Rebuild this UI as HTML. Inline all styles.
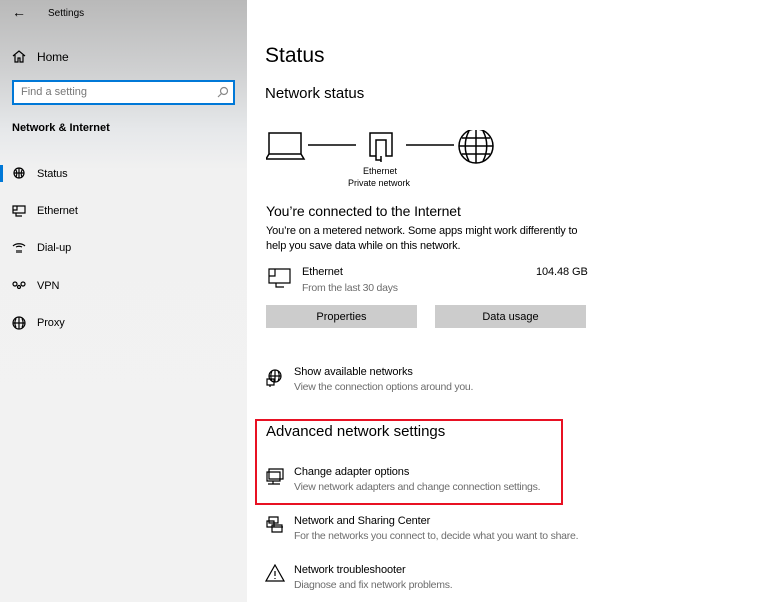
<!DOCTYPE html><html><head><style>
*{margin:0;padding:0;box-sizing:border-box}
body{width:768px;height:602px;position:relative;overflow:hidden;font-family:"Liberation Sans",sans-serif;color:#000;background:#fff}
.side{position:absolute;left:0;top:0;width:247px;height:602px;background:linear-gradient(180deg,#b9b9b9 0,#cfd0d1 70px,#e6e8ea 130px,#f1f1f1 170px,#f2f2f2 100%)}
.t{position:absolute;white-space:nowrap}
svg{position:absolute;fill:none;stroke:#000;stroke-width:1.2}
.s{font-size:11px;letter-spacing:-0.1px}
.g{color:#6d6d6d;font-size:10.5px;letter-spacing:-0.25px}
.btn{position:absolute;background:#ccc;height:23px;font-size:11px;text-align:center;line-height:24px;width:151px}
</style></head><body>
<div class="side">
<div class="t" style="left:12px;top:4px;font-size:14px">&#8592;</div>
<div class="t" style="left:48px;top:8px;font-size:10px">Settings</div>
<svg style="left:12px;top:50px" width="14" height="13" viewBox="0 0 14 13"><path d="M1 6L7 1L13 6M3 5V12H6V8H8V12H11V5"/></svg>
<div class="t s" style="left:37px;top:50px;font-size:12px">Home</div>
<div style="position:absolute;left:12px;top:80px;width:223px;height:25px;border:2px solid #0078d7;background:#fff"></div>
<div class="t" style="left:21px;top:86px;font-size:11px;color:#777">Find a setting</div>
<svg style="left:217px;top:86px;stroke:#888" width="12" height="12"><circle cx="7" cy="5" r="3.5"/><path d="M4.5 7.5L1 11"/></svg>
<div class="t" style="left:12px;top:122px;font-size:11px;font-weight:bold">Network &amp; Internet</div>
<div style="position:absolute;left:0;top:165px;width:3px;height:17px;background:#0078d7"></div>
<svg style="left:12px;top:167px" width="14" height="14"><circle cx="7" cy="6" r="5"/><path d="M2 6H12M7 1V11M4 3C5 5 5 8 4 10M10 3C9 5 9 8 10 10"/></svg>
<div class="t s" style="left:37px;top:168px">Status</div>
<svg style="left:12px;top:205px" width="14" height="12"><path d="M1 1H13V8H1ZM4 8V11H10M1 1V5H5V1"/></svg>
<div class="t s" style="left:37px;top:205px">Ethernet</div>
<svg style="left:12px;top:242px" width="14" height="12"><path d="M1 4C4 1 10 1 13 4M4 5C6 4 8 4 10 5M5 8V11M7 8V11M9 8V11"/></svg>
<div class="t s" style="left:37px;top:242px">Dial-up</div>
<svg style="left:12px;top:281px" width="14" height="8"><circle cx="3" cy="3" r="2"/><circle cx="11" cy="3" r="2"/><circle cx="7" cy="6" r="1.5"/></svg>
<div class="t s" style="left:37px;top:280px">VPN</div>
<svg style="left:12px;top:316px" width="14" height="14"><circle cx="7" cy="7" r="6"/><path d="M1 7H13M7 1V13M4 2.5C2.5 5.5 2.5 8.5 4 11.5M10 2.5C11.5 5.5 11.5 8.5 10 11.5"/></svg>
<div class="t s" style="left:37px;top:317px">Proxy</div>
</div>

<div class="t" style="left:265px;top:44px;font-size:21px">Status</div>
<div class="t" style="left:265px;top:85px;font-size:15px">Network status</div>
<svg style="left:266px;top:130px;stroke-width:1.5" width="235" height="35"><path d="M3 3H35V24H3ZM0 29H38L35 24M3 24L0 29"/><path d="M42 15H90M140 15H188"/><path d="M104 3H126V26H120V10H110V26H104ZM110 26V30H115"/><path d="M115 26V32"/><circle cx="210" cy="16" r="17"/><path d="M193 16H227M210 -1V33M203 1C198 10 198 22 203 31M217 1C222 10 222 22 217 31M196 8H224M196 24H224"/></svg>
<div class="t" style="left:363px;top:166px;font-size:9px">Ethernet</div>
<div class="t" style="left:348px;top:178px;font-size:9px">Private network</div>
<div class="t" style="left:266px;top:203px;font-size:14px;letter-spacing:-0.1px">You’re connected to the Internet</div>
<div class="t s" style="left:266px;top:224px;line-height:15px;letter-spacing:-0.15px">You’re on a metered network. Some apps might work differently to<br>help you save data while on this network.</div>
<svg style="left:268px;top:267px" width="24" height="22"><path d="M1 2H22V16H1ZM8 16V20H16M1 2V9H7V2"/></svg>
<div class="t s" style="left:302px;top:266px">Ethernet</div>
<div class="t g" style="left:302px;top:282px">From the last 30 days</div>
<div class="t s" style="left:536px;top:266px">104.48 GB</div>
<div class="btn" style="left:266px;top:305px">Properties</div>
<div class="btn" style="left:435px;top:305px">Data usage</div>
<svg style="left:266px;top:369px" width="18" height="18"><circle cx="9" cy="7" r="6"/><path d="M3 7H15M9 1V13M6 2C4.5 5 4.5 9 6 12M12 2C13.5 5 13.5 9 12 12M1 10H8V16H1ZM4 16V18"/></svg>
<div class="t s" style="left:294px;top:366px">Show available networks</div>
<div class="t g" style="left:294px;top:381px">View the connection options around you.</div>
<div style="position:absolute;left:255px;top:419px;width:308px;height:86px;border:2px solid #e81123"></div>
<div class="t" style="left:266px;top:423px;font-size:15px">Advanced network settings</div>
<svg style="left:266px;top:468px" width="18" height="18"><path d="M3 1H17V11H3ZM1 4H14V13H1ZM7 13V16M2 16H14"/></svg>
<div class="t s" style="left:294px;top:466px">Change adapter options</div>
<div class="t g" style="left:294px;top:481px">View network adapters and change connection settings.</div>
<svg style="left:266px;top:516px" width="18" height="18"><path d="M3 1H12V7H3ZM1 5H8V11H1ZM6 9H16V16H6ZM6 11H17"/></svg>
<div class="t s" style="left:294px;top:515px">Network and Sharing Center</div>
<div class="t g" style="left:294px;top:530px">For the networks you connect to, decide what you want to share.</div>
<svg style="left:265px;top:564px" width="20" height="18"><path d="M10 1L19 17H1Z M10 7V12M10 14V15"/></svg>
<div class="t s" style="left:294px;top:564px">Network troubleshooter</div>
<div class="t g" style="left:294px;top:579px">Diagnose and fix network problems.</div>
</body></html>
